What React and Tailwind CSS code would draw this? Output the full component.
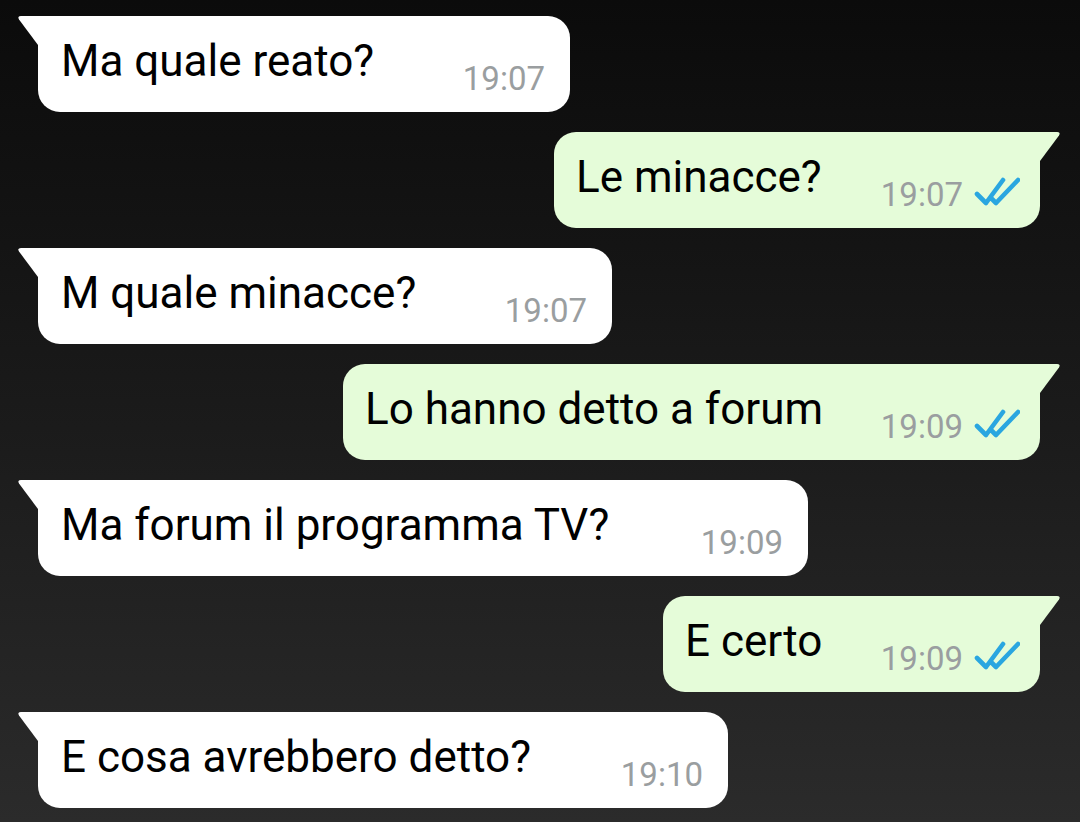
const messages = [
  { id: 1, out: false, text: "Ma quale reato?", time: "19:07", w: 532 },
  { id: 2, out: true, text: "Le minacce?", time: "19:07", w: 486 },
  { id: 3, out: false, text: "M quale minacce?", time: "19:07", w: 574 },
  { id: 4, out: true, text: "Lo hanno detto a forum", time: "19:09", w: 697 },
  { id: 5, out: false, text: "Ma forum il programma TV?", time: "19:09", w: 770 },
  { id: 6, out: true, text: "E certo", time: "19:09", w: 377 },
  { id: 7, out: false, text: "E cosa avrebbero detto?", time: "19:10", w: 690 },
];

function DoubleCheck() {
  return (
    <svg width="46" height="30" viewBox="0 0 46 30" className="text-[#2aa6e0] ml-[11px] mt-[2px]">
      <path
        d="M3 17 L12 26 L29 3 M18 22 L22 26 L44 3"
        fill="none"
        stroke="currentColor"
        strokeWidth="4.6"
        strokeLinecap="round"
        strokeLinejoin="round"
      />
    </svg>
  );
}

function Tail({ out, color }) {
  if (out) {
    return (
      <svg
        width="22"
        height="30"
        viewBox="0 0 22 30"
        className="absolute top-0 -right-[21px]"
      >
        <path d="M0 0 H18 Q22 0 20 3.5 L1 29 H0 Z" fill={color} />
      </svg>
    );
  }
  return (
    <svg
      width="22"
      height="30"
      viewBox="0 0 22 30"
      className="absolute top-0 -left-[21px]"
    >
      <path d="M22 0 H4 Q0 0 2 3.5 L21 29 H22 Z" fill={color} />
    </svg>
  );
}

function Bubble({ msg }) {
  const color = msg.out ? "#e5fcd9" : "#ffffff";
  return (
    <div className={msg.out ? "flex justify-end pr-[40px]" : "flex pl-[38px]"}>
      <div
        className={
          "relative flex justify-between items-start h-[96px] " +
          (msg.out
            ? "bg-[#e5fcd9] rounded-[22px] rounded-tr-none pl-[22px] pr-[20px]"
            : "bg-white rounded-[22px] rounded-tl-none pl-[23px] pr-[25px]")
        }
        style={{ width: msg.w }}
      >
        <Tail out={msg.out} color={color} />
        <span className="mt-[20px] text-[44px] leading-[50px] text-black whitespace-nowrap">
          {msg.text}
        </span>
        <div className="flex items-start mt-[43px]">
          <span className="text-[33px] leading-[40px] text-[#9a9ea0]">{msg.time}</span>
          {msg.out && <DoubleCheck />}
        </div>
      </div>
    </div>
  );
}

export default function App() {
  return (
    <div
      className="w-[1080px] h-[822px] overflow-hidden bg-gradient-to-b from-[#0b0b0b] to-[#2b2b2b] pt-4 flex flex-col gap-5"
      style={{ fontFamily: "Roboto, 'Liberation Sans', sans-serif" }}
    >
      {messages.map((m) => (
        <Bubble key={m.id} msg={m} />
      ))}
    </div>
  );
}
